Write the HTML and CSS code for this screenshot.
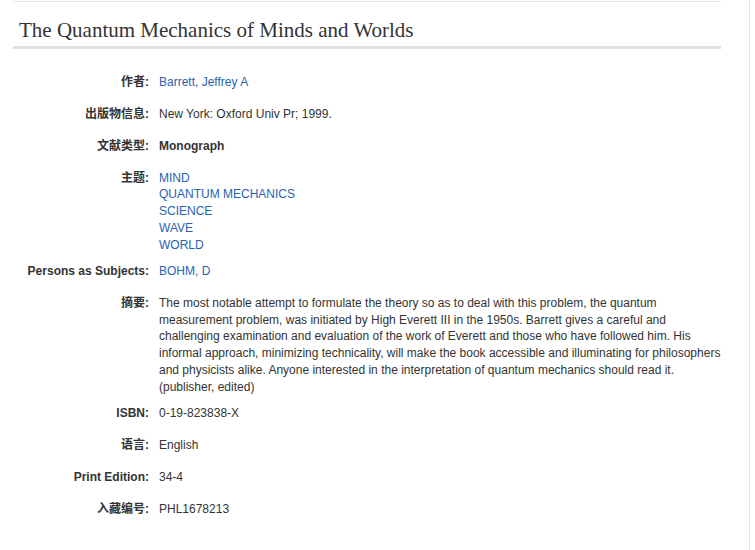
FILE: index.html
```html
<!DOCTYPE html>
<html lang="zh">
<head>
<meta charset="utf-8">
<title>The Quantum Mechanics of Minds and Worlds</title>
<link rel="stylesheet" href="styles.css">
</head>
<body>
<div class="page">
  <div class="content">
    <div class="topline"></div>
    <h1 class="title">The Quantum Mechanics of Minds and Worlds</h1>
    <div class="details">
      <div class="row">
        <div class="label">作者:</div>
        <div class="value"><a href="#">Barrett, Jeffrey A</a></div>
      </div>
      <div class="row">
        <div class="label">出版物信息:</div>
        <div class="value">New York: Oxford Univ Pr; 1999.</div>
      </div>
      <div class="row">
        <div class="label">文献类型:</div>
        <div class="value strong">Monograph</div>
      </div>
      <div class="row">
        <div class="label">主题:</div>
        <div class="value list">
          <a href="#">MIND</a>
          <a href="#">QUANTUM MECHANICS</a>
          <a href="#">SCIENCE</a>
          <a href="#">WAVE</a>
          <a href="#">WORLD</a>
        </div>
      </div>
      <div class="row">
        <div class="label">Persons as Subjects:</div>
        <div class="value"><a href="#">BOHM, D</a></div>
      </div>
      <div class="row">
        <div class="label">摘要:</div>
        <div class="value abstract">The most notable attempt to formulate the theory so as to deal with this problem, the quantum measurement problem, was initiated by High Everett III in the 1950s. Barrett gives a careful and challenging examination and evaluation of the work of Everett and those who have followed him. His informal approach, minimizing technicality, will make the book accessible and illuminating for philosophers and physicists alike. Anyone interested in the interpretation of quantum mechanics should read it. (publisher, edited)</div>
      </div>
      <div class="row">
        <div class="label">ISBN:</div>
        <div class="value">0-19-823838-X</div>
      </div>
      <div class="row">
        <div class="label">语言:</div>
        <div class="value">English</div>
      </div>
      <div class="row">
        <div class="label">Print Edition:</div>
        <div class="value">34-4</div>
      </div>
      <div class="row">
        <div class="label">入藏编号:</div>
        <div class="value">PHL1678213</div>
      </div>
    </div>
  </div>
</div>
</body>
</html>
```

FILE: styles.css
```css
html, body {
  margin: 0;
  padding: 0;
  background: #ffffff;
}

body {
  font-family: "Liberation Sans", Arial, "Noto Sans CJK SC", sans-serif;
  font-size: 12px;
  color: #333333;
}

.page {
  width: 750px;
  height: 550px;
  box-sizing: border-box;
  border-right: 1px solid #e6e6e6;
  overflow: hidden;
}

.content {
  margin-left: 13px;
  width: 708px;
}

.topline {
  height: 1px;
  margin-top: 1px;
  background: #e6e6e6;
}

.title {
  margin: 0;
  padding: 16px 0 4px 6px;
  font-family: "Liberation Serif", Georgia, serif;
  font-weight: normal;
  font-size: 21px;
  line-height: 24px;
  color: #333333;
  border-bottom: 3px solid #e0e0e0;
}

.details {
  margin-top: 20px;
}

.row {
  display: flex;
  gap: 10px;
  padding: 4.6px 0;
  min-height: 32px;
  box-sizing: border-box;
  line-height: 16.8px;
}

.label {
  width: 136px;
  flex: none;
  text-align: right;
  font-weight: bold;
  color: #333333;
  font-family: "Liberation Sans", Arial, "Noto Sans CJK SC", sans-serif;
}

.value {
  flex: 1;
  color: #333333;
}

.value.strong {
  font-weight: bold;
}

.value.list {
  display: flex;
  flex-direction: column;
  align-items: flex-start;
}

.value.abstract {
  margin-right: -8px;
}

a {
  color: #2a62b3;
  text-decoration: none;
}
```
